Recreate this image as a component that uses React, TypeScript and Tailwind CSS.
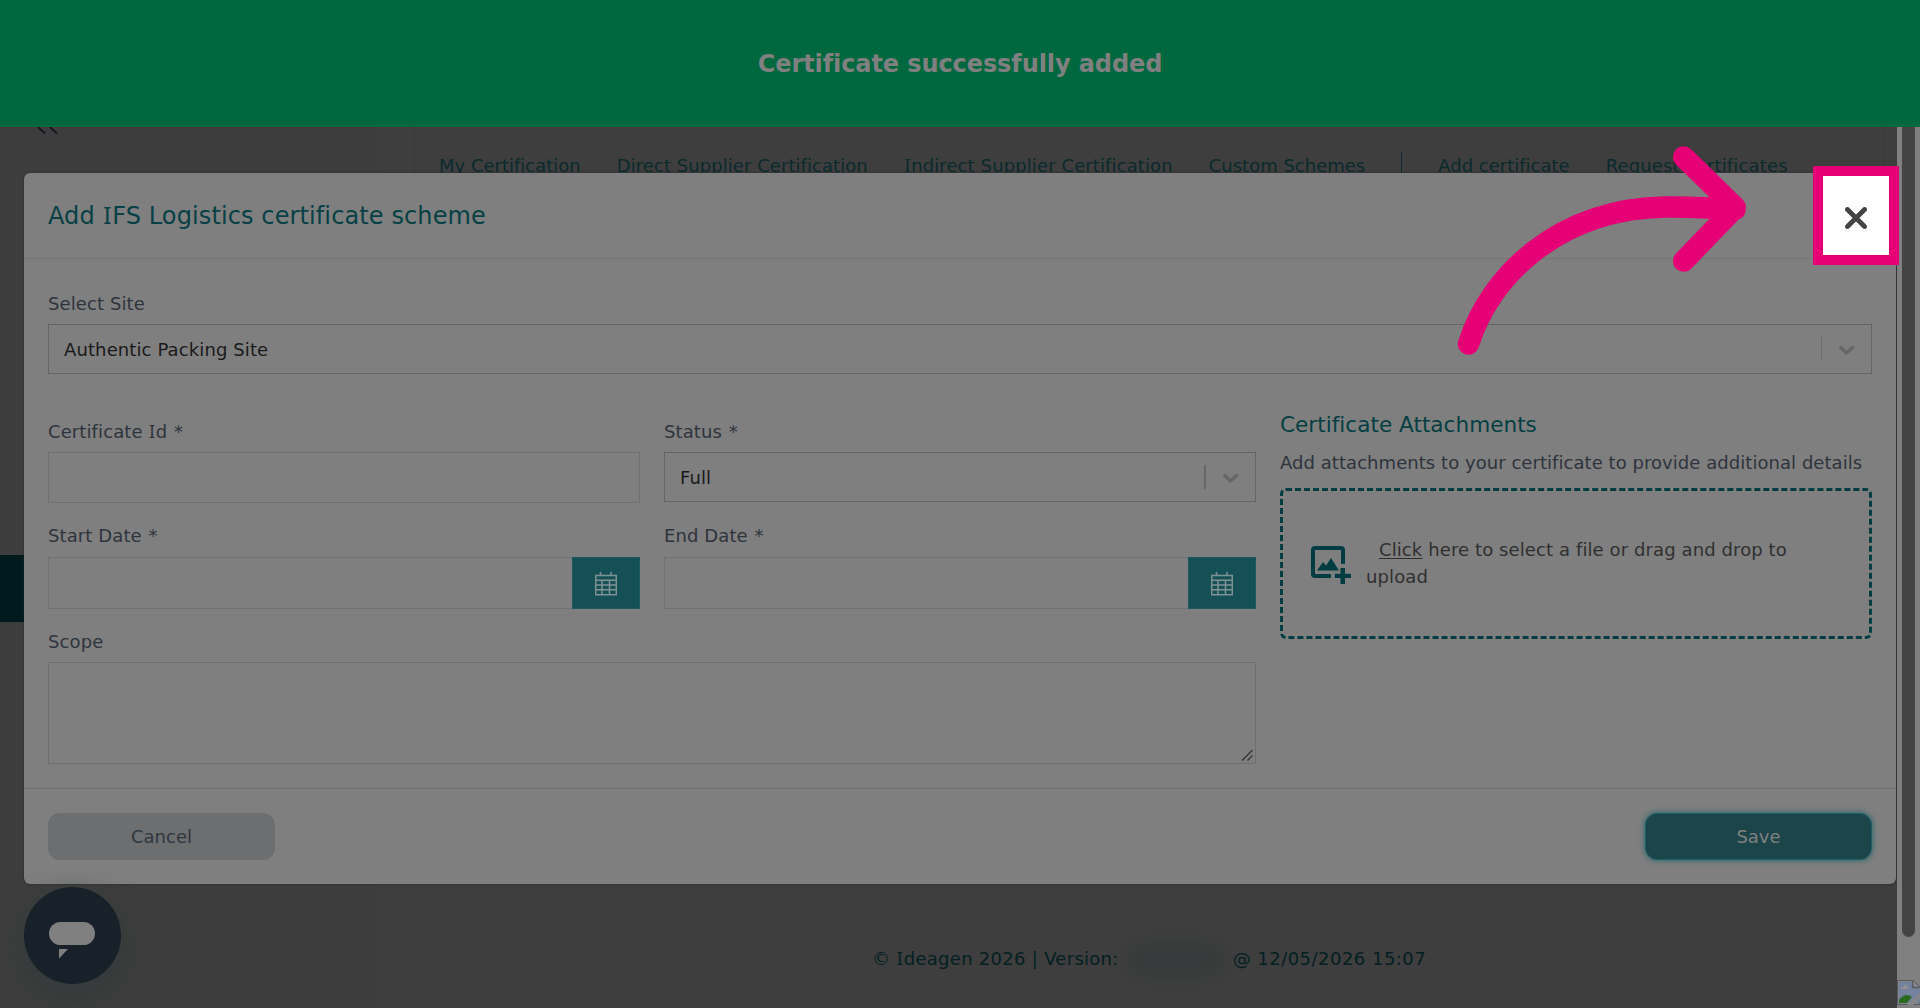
import type { ReactNode } from "react";

function Label({ children, required = false }: { children: ReactNode; required?: boolean }) {
  return (
    <label className="block h-[26px] pt-px text-[18px] leading-[26px] tracking-[0.1px] text-[#2e343d]">
      {children}
      {required && <span className="tracking-[1px]"> *</span>}
    </label>
  );
}

function SerifI() {
  return <span className="mx-[0.03em] font-['Noto_Sans',sans-serif] leading-none">I</span>;
}

function CalendarIcon() {
  return (
    <svg className="mt-[2px] h-[24px] w-[22px]" fill="none" stroke="#7f9293" strokeWidth="1.5" viewBox="0 0 22 24">
      <path d="M.7 3.500h20.600v19.300H.7zM.7 8.200h20.600M.7 13h20.600M.7 17.800h20.600M7 8.200v14.600M14.500 8.200v14.600M5.500 0v3.500M16 0v3.500" />
    </svg>
  );
}

function SelectBox({ value, dark = false }: { value: string; dark?: boolean }) {
  return (
    <div className="flex h-[50px] items-center border border-[#666] pl-[15px] text-[18px] tracking-[0.11px] text-[#1a1a1a]">
      <span className="flex-1">{value}</span>
      <span className={dark ? "h-6 w-[2px] bg-[#676767]" : "h-6 w-px bg-[#6c6c6c]"} />
      <svg className="mx-[12px] size-[25px]" fill="#666" stroke="#666" strokeWidth="0.500" viewBox="0 0 20 20">
        <path d="M4.516 7.548c0.436-0.446 1.043-0.481 1.576 0l3.908 3.747 3.908-3.747c0.533-0.481 1.141-0.446 1.574 0 0.436 0.445 0.408 1.197 0 1.615-0.406 0.418-4.695 4.502-4.695 4.502-0.217 0.223-0.502 0.335-0.787 0.335s-0.57-0.112-0.789-0.335c0 0-4.287-4.084-4.695-4.502s-0.436-1.17 0-1.615z" />
      </svg>
    </div>
  );
}

function DateField({ label }: { label: string }) {
  return (
    <div className="flex-1">
      <Label required>{label}</Label>
      <div className="mt-[9px] flex h-[52px]">
        <div className="flex-1 border border-r-0 border-[#727272]" />
        <button className="grid w-[68px] place-items-center border border-[#1b5a60] bg-[#145056]" type="button">
          <CalendarIcon />
        </button>
      </div>
    </div>
  );
}

export default function App() {
  return (
    <div className="relative h-[1008px] w-[1920px] overflow-hidden bg-[#3e3e3e] font-['Verdana','DejaVu_Sans',sans-serif] [font-variant-ligatures:none]">
      <header className="flex h-[127px] items-center justify-center bg-[#00683f] text-[24px] font-bold tracking-[-0.09px] text-[#808080]">
        <span>Certificate successfully added</span>
      </header>
      <div className="flex h-[881px]">
        <aside className="flex w-[378px] flex-col bg-[#3d3d3d]">
          <svg className="ml-[36px] h-[7px] w-[22px]" fill="none" stroke="#14181f" strokeWidth="2" viewBox="0 0 22 7">
            <path d="M1 -1l8 7.500M13 -1l8 7.500" />
          </svg>
          <div className="mt-[421px] h-[67px] bg-[#001a1d]" />
        </aside>
        <main className="flex w-[1519px] flex-col">
          <nav className="ml-[36px] flex h-[100px] w-[1470px] gap-[36px] border-x border-[#383838] pt-[25px] pl-[24px] text-[18px] leading-[28px] whitespace-nowrap text-[#0b2a2d]">
            <a>My Certification</a>
            <a className="tracking-[0.06px]">Direct Supplier Certification</a>
            <a className="tracking-[0.11px]">
              <SerifI />
              ndirect Supplier Certification
            </a>
            <a>Custom Schemes</a>
            <span className="h-[40px] w-px bg-[#0b2a2d]" />
            <a>Add certificate</a>
            <a className="tracking-[0.15px]">Request certificates</a>
          </nav>
          <footer className="mt-auto flex h-[99px] items-start pl-[494px] text-[18px] leading-[28px] whitespace-nowrap text-[#031f22]">
            <span className="mt-[36px] tracking-[0.28px]">
              © <SerifI />
              deagen 2026 | Version:
            </span>
            <span className="mx-[8px] mt-[34px] h-[34px] w-[98px] rounded-full bg-[#383b3b] blur-[8px]" />
            <span className="mt-[36px] tracking-[0.47px]">@ 12/05/2026 15:07</span>
          </footer>
        </main>
        <div className="flex flex-1 flex-col bg-[#808080]">
          <div className="ml-[5px] h-[810px] w-[13px] rounded-b-full bg-[#444]" />
          <svg className="mt-[43px] h-[25px] w-[23px]" viewBox="0 0 23 25">
            <path d="M.5 .5h16L23 7v17.500H.5z" fill="#808691" stroke="#5a5a5a" />
            <path d="M2 2h13v6h8v14H2z" fill="#7482a0" />
            <path d="M3 9q1-2.500 3-2 2-4.500 4 0 2 0 2 2z" fill="#909090" />
            <path d="M2 23v-3q6-8 13-3l-5 6z" fill="#2a6a1d" />
            <path d="M15.500 1v6.500H23" fill="none" stroke="#5a5a5a" strokeWidth="1.300" />
            <path d="M10 25L23 13v5l-7 7z" fill="#858585" />
          </svg>
        </div>
      </div>

      <section className="absolute top-[173px] left-[24px] flex h-[711px] w-[1872px] flex-col rounded-[6px] bg-[#7f7f7f] shadow-[0_0_2px_#222]">
        <h1 className="flex h-[86px] items-center border-b border-[#747474] px-[24px] text-[24px] tracking-[0.11px] text-[#074045]">
          <span>
            Add <SerifI />
            FS Logistics certificate scheme
          </span>
        </h1>
        <div className="h-[529px] px-[24px] pt-[31px]">
          <Label>Select Site</Label>
          <div className="mt-[8px]">
            <SelectBox value="Authentic Packing Site" />
          </div>
          <div className="mt-[35px] flex gap-[24px]">
            <div className="w-[1208px]">
              <div className="mt-[9px] flex gap-[24px]">
                <div className="flex-1">
                  <Label required>
                    Certificate <SerifI />d
                  </Label>
                  <div className="mt-[8px] h-[51px] border border-[#707070]" />
                </div>
                <div className="flex-1">
                  <Label required>Status</Label>
                  <div className="mt-[8px]">
                    <SelectBox dark value="Full" />
                  </div>
                </div>
              </div>
              <div className="mt-[19px] flex gap-[24px]">
                <DateField label="Start Date" />
                <DateField label="End Date" />
              </div>
              <div className="mt-[19px]">
                <Label>Scope</Label>
                <div className="mt-[8px] flex h-[102px] items-end justify-end border border-[#6f6f6f] p-[2px]">
                  <svg className="size-[12px]" fill="none" stroke="#333" strokeWidth="1.300" viewBox="0 0 12 12">
                    <path d="M1 11.500L11.500 1M6.500 11.500l5-5" />
                  </svg>
                </div>
              </div>
            </div>
            <div className="flex-1">
              <h2 className="pt-px text-[21.6px] leading-[30px] text-[#063f43]">Certificate Attachments</h2>
              <p className="mt-[10px] text-[18px] leading-[26px] tracking-[0.05px] whitespace-nowrap text-[#2e343d]">
                Add attachments to your certificate to provide additional details
              </p>
              <div className="mt-[12px] flex h-[151px] items-center rounded-[6px] border-[3px] border-dashed border-[#003d42] pl-[26px]">
                <svg className="h-[40px] w-[42px]" fill="#003d42" viewBox="0 0 42 40">
                  <path d="M6 2h26a4 4 0 0 1 4 4v14h-4V6H6v24h16v4H6a4 4 0 0 1-4-4V6a4 4 0 0 1 4-4z" />
                  <path d="M8 26.500l6-8.500 3 3.500 5-7.500 8 12.500zM31.500 24h4.500v5.700h6v4.300h-6v6h-4.500v-6h-5.700v-4.300h5.700z" />
                </svg>
                <p className="mb-px ml-[15px] text-[18px] leading-[27px] tracking-[0.1px] whitespace-nowrap text-[#303030]">
                  <span className="block pl-[13px]">
                    <u className="underline-offset-2">Click</u> here to select a file or drag and drop to
                  </span>
                  <span className="block">upload</span>
                </p>
              </div>
            </div>
          </div>
        </div>
        <div className="flex flex-1 items-center justify-between border-t border-[#6f6f6f] px-[24px] text-[18px]">
          <button className="h-[47px] w-[227px] rounded-[12px] bg-[#6d6e70] text-[#30363f]" type="button">Cancel</button>
          <button className="h-[47px] w-[227px] rounded-[12px] border border-[#1b6066] bg-[#1c4549] text-[#808080] shadow-[0_0_6px_#1b6066]" type="button">Save</button>
        </div>
      </section>

      <button aria-label="Chat" className="absolute top-[887px] left-[24px] grid size-[97px] place-items-center rounded-full bg-[#18212a] shadow-[0_12px_30px_#343a3a]" type="button">
        <svg className="mt-[8px] mr-[2px] h-[38px] w-[48px]" fill="#808080" viewBox="0 0 48 38">
          <rect height="23" rx="11.500" width="46" x="1" y="1" />
          <path d="M11 28h9l-9 9.500z" />
        </svg>
      </button>

      <svg className="absolute top-[130px] left-[1440px] h-[240px] w-[320px]" fill="none" stroke="#e60076" strokeLinecap="round" strokeLinejoin="round" strokeWidth="21.500" viewBox="0 0 320 240">
        <path d="M28.500 214C50 146 118 79 225 77Q255 76.500 295 79.500M243.700 27L295.300 77.500L243.700 131" />
      </svg>
      <button aria-label="Close" className="absolute top-[166px] left-[1813px] grid h-[99px] w-[86px] place-items-center border-[10px] border-[#e60076] bg-white" type="button">
        <svg className="mt-[5px] size-[22px]" fill="none" stroke="#424344" strokeLinecap="round" strokeWidth="4.800" viewBox="0 0 22 22">
          <path d="M2.500 2.500l17 17M19.500 2.500l-17 17" />
        </svg>
      </button>
    </div>
  );
}
